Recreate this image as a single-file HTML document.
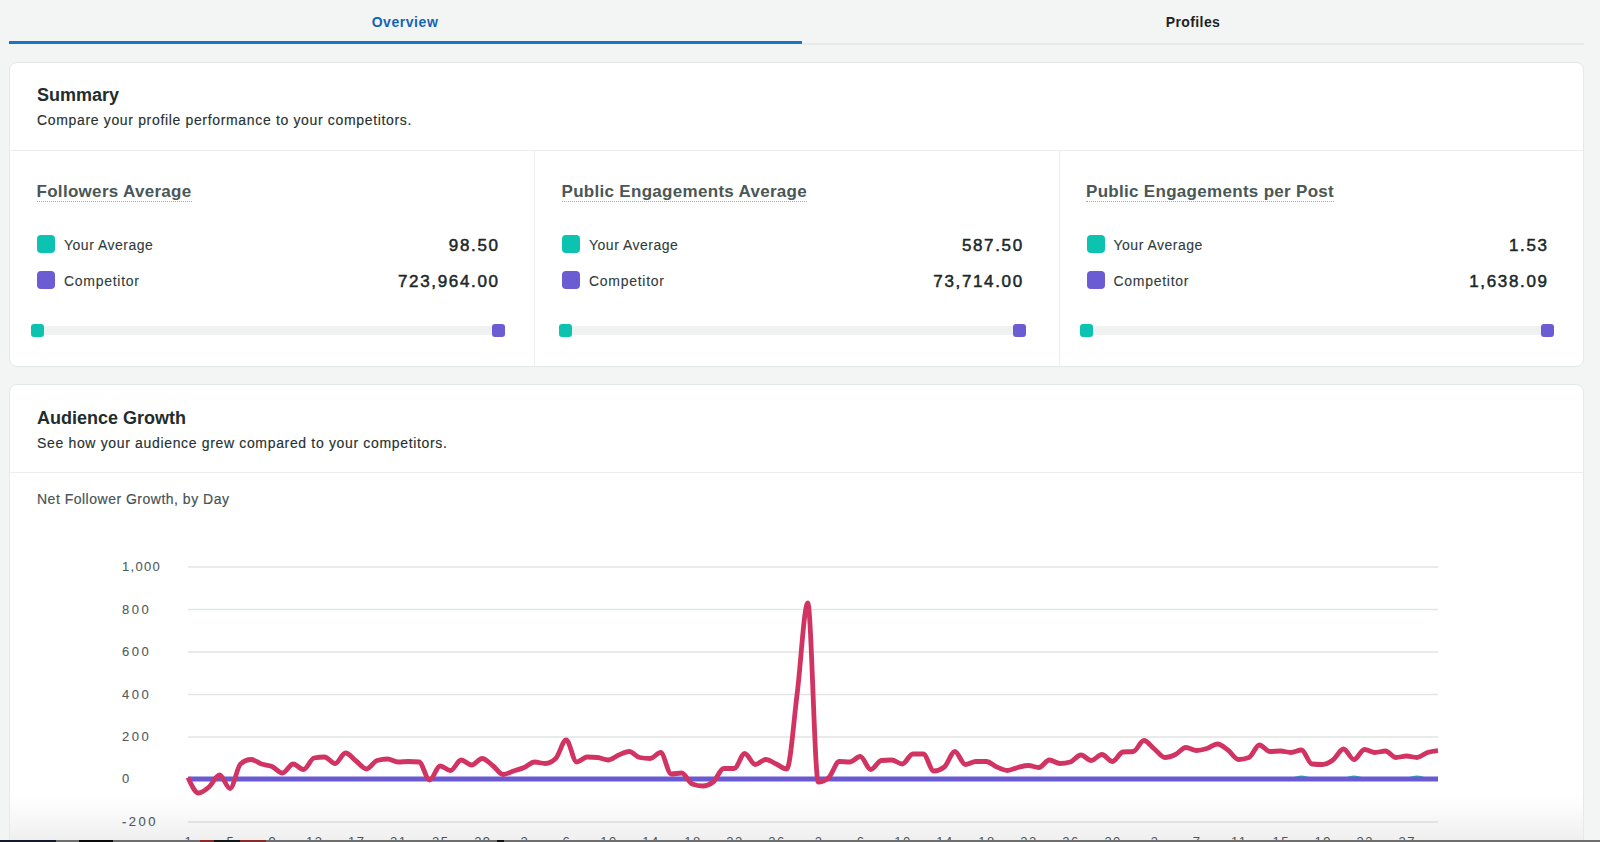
<!DOCTYPE html><html><head><meta charset="utf-8"><title>Competitors Overview</title><style>
*{box-sizing:border-box;margin:0;padding:0}
html,body{width:1600px;height:842px;overflow:hidden;background:#f3f4f4;font-family:"Liberation Sans",sans-serif}
.a{position:absolute;white-space:nowrap;line-height:1}
.card{position:absolute;left:9px;width:1575px;background:#fff;border:1px solid #e6e9e9;border-radius:8px}
.hl{position:absolute;left:0;right:0;height:1px;background:#eceeee}
.vl{position:absolute;width:1px;background:#eceeee}
.h{font-size:18px;font-weight:bold;color:#222d2d}
.sub{font-size:14px;color:#263131;letter-spacing:0.66px;-webkit-text-stroke:0.15px #263131}
.ct{font-size:17px;font-weight:bold;color:#4a5757;letter-spacing:0.3px;border-bottom:1px dotted #a3adad;padding-bottom:1px;line-height:17px}
.sw{position:absolute;width:18px;height:18px;border-radius:4px}
.lab{font-size:14px;color:#2f3b3b;letter-spacing:0.5px;-webkit-text-stroke:0.1px #2f3b3b}
.val{font-size:17px;color:#1c2828;letter-spacing:1.65px;text-align:right;-webkit-text-stroke:0.5px #1c2828}
.track{position:absolute;height:9px;background:#f0f1f1}
.mk{position:absolute;width:13px;height:13px;border-radius:3px}
.teal{background:#0cc3b1}
.purp{background:#6b5cd4}
.yl{font-size:13px;color:#4f5b5b;letter-spacing:2.5px;-webkit-text-stroke:0.1px #4f5b5b}
.xl{font-size:13px;color:#4f5b5b;letter-spacing:1.5px;text-align:center;width:40px}
</style></head><body>
<div class="a" style="left:0;top:14.75px;width:810px;text-align:center;font-size:14px;font-weight:bold;color:#1364b4;letter-spacing:0.55px">Overview</div>
<div class="a" style="left:802px;top:14.75px;width:782px;text-align:center;font-size:14px;font-weight:bold;color:#1b2525;letter-spacing:0.4px">Profiles</div>
<div style="position:absolute;left:9px;top:41px;width:793px;height:3px;background:#1b74c6"></div>
<div style="position:absolute;left:802px;top:43px;width:782px;height:2px;background:#e8eaea"></div>
<div class="card" style="top:62px;height:305px">
<div class="a h" style="left:27.00px;top:22.96px">Summary</div>
<div class="a sub" style="left:27.00px;top:50.15px">Compare your profile performance to your competitors.</div>
<div class="hl" style="top:87px"></div>
<div class="vl" style="left:524px;top:87px;height:216px"></div>
<div class="vl" style="left:1049px;top:87px;height:216px"></div>
<div class="a ct" style="left:26.50px;top:120.11px">Followers Average</div>
<div class="sw teal" style="left:27.00px;top:172.30px"></div>
<div class="sw purp" style="left:27.00px;top:208.30px"></div>
<div class="a lab" style="left:54.00px;top:175.25px">Your Average</div>
<div class="a lab" style="left:54.00px;top:211.15px;letter-spacing:0.72px">Competitor</div>
<div class="a val" style="right:1083.40px;top:174.11px">98.50</div>
<div class="a val" style="right:1083.40px;top:209.51px">723,964.00</div>
<div class="track" style="left:26.50px;top:263.00px;width:462.50px"></div>
<div class="mk teal" style="left:20.50px;top:261.00px"></div>
<div class="mk purp" style="left:482.00px;top:261.00px"></div>
<div class="a ct" style="left:551.50px;top:120.11px">Public Engagements Average</div>
<div class="sw teal" style="left:552.00px;top:172.30px"></div>
<div class="sw purp" style="left:552.00px;top:208.30px"></div>
<div class="a lab" style="left:579.00px;top:175.25px">Your Average</div>
<div class="a lab" style="left:579.00px;top:211.15px;letter-spacing:0.72px">Competitor</div>
<div class="a val" style="right:559.20px;top:174.11px">587.50</div>
<div class="a val" style="right:559.20px;top:209.51px">73,714.00</div>
<div class="track" style="left:554.50px;top:263.00px;width:455.10px"></div>
<div class="mk teal" style="left:548.50px;top:261.00px"></div>
<div class="mk purp" style="left:1002.60px;top:261.00px"></div>
<div class="a ct" style="left:1076.00px;top:120.11px">Public Engagements per Post</div>
<div class="sw teal" style="left:1076.50px;top:172.30px"></div>
<div class="sw purp" style="left:1076.50px;top:208.30px"></div>
<div class="a lab" style="left:1103.50px;top:175.25px">Your Average</div>
<div class="a lab" style="left:1103.50px;top:211.15px;letter-spacing:0.72px">Competitor</div>
<div class="a val" style="right:34.40px;top:174.11px">1.53</div>
<div class="a val" style="right:34.40px;top:209.51px">1,638.09</div>
<div class="track" style="left:1075.50px;top:263.00px;width:462.80px"></div>
<div class="mk teal" style="left:1069.50px;top:261.00px"></div>
<div class="mk purp" style="left:1531.30px;top:261.00px"></div>
</div>
<div class="card" style="top:384px;height:520px">
<div class="a h" style="left:27.00px;top:23.76px">Audience Growth</div>
<div class="a sub" style="left:27.00px;top:50.65px">See how your audience grew compared to your competitors.</div>
<div class="hl" style="top:87px"></div>
<div class="a sub" style="left:27.00px;top:106.55px;color:#4a5757;letter-spacing:0.5px">Net Follower Growth, by Day</div>
</div>
<svg style="position:absolute;left:0;top:0" width="1600" height="842" viewBox="0 0 1600 842"><rect x="188" y="566.25" width="1250" height="1.5" fill="#e2e5e5"/><rect x="188" y="608.75" width="1250" height="1.5" fill="#e2e5e5"/><rect x="188" y="651.25" width="1250" height="1.5" fill="#e2e5e5"/><rect x="188" y="693.75" width="1250" height="1.5" fill="#e2e5e5"/><rect x="188" y="736.25" width="1250" height="1.5" fill="#e2e5e5"/><rect x="188" y="778.25" width="1250" height="1.5" fill="#e2e5e5"/><rect x="188" y="821.25" width="1250" height="1.5" fill="#e2e5e5"/></svg>
<div class="a yl" style="left:122px;top:560.20px;letter-spacing:1.3px;">1,000</div>
<div class="a yl" style="left:122px;top:602.70px;">800</div>
<div class="a yl" style="left:122px;top:645.20px;">600</div>
<div class="a yl" style="left:122px;top:687.70px;">400</div>
<div class="a yl" style="left:122px;top:730.20px;">200</div>
<div class="a yl" style="left:122px;top:772.20px;">0</div>
<div class="a yl" style="left:122px;top:815.20px;">-200</div>
<div class="a xl" style="left:168.75px;top:834.50px">1</div>
<div class="a xl" style="left:210.77px;top:834.50px">5</div>
<div class="a xl" style="left:252.78px;top:834.50px">9</div>
<div class="a xl" style="left:294.80px;top:834.50px">13</div>
<div class="a xl" style="left:336.82px;top:834.50px">17</div>
<div class="a xl" style="left:378.83px;top:834.50px">21</div>
<div class="a xl" style="left:420.85px;top:834.50px">25</div>
<div class="a xl" style="left:462.87px;top:834.50px">29</div>
<div class="a xl" style="left:504.88px;top:834.50px">2</div>
<div class="a xl" style="left:546.90px;top:834.50px">6</div>
<div class="a xl" style="left:588.92px;top:834.50px">10</div>
<div class="a xl" style="left:630.93px;top:834.50px">14</div>
<div class="a xl" style="left:672.95px;top:834.50px">18</div>
<div class="a xl" style="left:714.97px;top:834.50px">22</div>
<div class="a xl" style="left:756.99px;top:834.50px">26</div>
<div class="a xl" style="left:799.00px;top:834.50px">2</div>
<div class="a xl" style="left:841.02px;top:834.50px">6</div>
<div class="a xl" style="left:883.04px;top:834.50px">10</div>
<div class="a xl" style="left:925.05px;top:834.50px">14</div>
<div class="a xl" style="left:967.07px;top:834.50px">18</div>
<div class="a xl" style="left:1009.09px;top:834.50px">22</div>
<div class="a xl" style="left:1051.10px;top:834.50px">26</div>
<div class="a xl" style="left:1093.12px;top:834.50px">30</div>
<div class="a xl" style="left:1135.14px;top:834.50px">3</div>
<div class="a xl" style="left:1177.15px;top:834.50px">7</div>
<div class="a xl" style="left:1219.17px;top:834.50px">11</div>
<div class="a xl" style="left:1261.19px;top:834.50px">15</div>
<div class="a xl" style="left:1303.20px;top:834.50px">19</div>
<div class="a xl" style="left:1345.22px;top:834.50px">23</div>
<div class="a xl" style="left:1387.24px;top:834.50px">27</div>
<svg style="position:absolute;left:0;top:0" width="1600" height="842" viewBox="0 0 1600 842"><path d="M188.00,779.00C191.50,779.00 195.00,779.00 198.50,779.00C202.01,779.00 205.51,779.00 209.01,779.00C212.51,779.00 216.01,779.00 219.51,779.00C223.01,779.00 226.52,779.00 230.02,779.00C233.52,779.00 237.02,779.00 240.52,779.00C244.02,779.00 247.52,779.00 251.03,779.00C254.53,779.00 258.03,779.00 261.53,779.00C265.03,779.00 268.53,779.00 272.03,779.00C275.54,779.00 279.04,779.00 282.54,779.00C286.04,779.00 289.54,779.00 293.04,779.00C296.54,779.00 300.04,779.00 303.55,779.00C307.05,779.00 310.55,779.00 314.05,779.00C317.55,779.00 321.05,779.00 324.55,779.00C328.06,779.00 331.56,779.00 335.06,779.00C338.56,779.00 342.06,779.00 345.56,779.00C349.06,779.00 352.57,779.00 356.07,779.00C359.57,779.00 363.07,779.00 366.57,779.00C370.07,779.00 373.57,779.00 377.08,779.00C380.58,779.00 384.08,779.00 387.58,779.00C391.08,779.00 394.58,779.00 398.08,779.00C401.59,779.00 405.09,779.00 408.59,779.00C412.09,779.00 415.59,779.00 419.09,779.00C422.59,779.00 426.10,779.00 429.60,779.00C433.10,779.00 436.60,779.00 440.10,779.00C443.60,779.00 447.10,779.00 450.61,779.00C454.11,779.00 457.61,779.00 461.11,779.00C464.61,779.00 468.11,779.00 471.61,779.00C475.11,779.00 478.62,779.00 482.12,779.00C485.62,779.00 489.12,779.00 492.62,779.00C496.12,779.00 499.62,779.00 503.13,779.00C506.63,779.00 510.13,779.00 513.63,779.00C517.13,779.00 520.63,779.00 524.13,779.00C527.64,779.00 531.14,779.00 534.64,779.00C538.14,779.00 541.64,779.00 545.14,779.00C548.64,779.00 552.15,779.00 555.65,779.00C559.15,779.00 562.65,779.00 566.15,779.00C569.65,779.00 573.15,779.00 576.66,779.00C580.16,779.00 583.66,779.00 587.16,779.00C590.66,779.00 594.16,779.00 597.66,779.00C601.17,779.00 604.67,779.00 608.17,779.00C611.67,779.00 615.17,779.00 618.67,779.00C622.17,779.00 625.68,779.00 629.18,779.00C632.68,779.00 636.18,779.00 639.68,779.00C643.18,779.00 646.68,779.00 650.18,779.00C653.69,779.00 657.19,779.00 660.69,779.00C664.19,779.00 667.69,779.00 671.19,779.00C674.69,779.00 678.20,779.00 681.70,779.00C685.20,779.00 688.70,779.00 692.20,779.00C695.70,779.00 699.20,779.00 702.71,779.00C706.21,779.00 709.71,779.00 713.21,779.00C716.71,779.00 720.21,779.00 723.71,779.00C727.22,779.00 730.72,779.00 734.22,779.00C737.72,779.00 741.22,779.00 744.72,779.00C748.22,779.00 751.73,779.00 755.23,779.00C758.73,779.00 762.23,779.00 765.73,779.00C769.23,779.00 772.73,779.00 776.24,779.00C779.74,779.00 783.24,779.00 786.74,779.00C790.24,779.00 793.74,779.00 797.24,779.00C800.75,779.00 804.25,779.00 807.75,779.00C811.25,779.00 814.75,779.00 818.25,779.00C821.75,779.00 825.25,779.00 828.76,779.00C832.26,779.00 835.76,779.00 839.26,779.00C842.76,779.00 846.26,779.00 849.76,779.00C853.27,779.00 856.77,779.00 860.27,779.00C863.77,779.00 867.27,779.00 870.77,779.00C874.27,779.00 877.78,779.00 881.28,779.00C884.78,779.00 888.28,779.00 891.78,779.00C895.28,779.00 898.78,779.00 902.29,779.00C905.79,779.00 909.29,779.00 912.79,779.00C916.29,779.00 919.79,779.00 923.29,779.00C926.80,779.00 930.30,779.00 933.80,779.00C937.30,779.00 940.80,779.00 944.30,779.00C947.80,779.00 951.31,779.00 954.81,779.00C958.31,779.00 961.81,779.00 965.31,779.00C968.81,779.00 972.31,779.00 975.82,779.00C979.32,779.00 982.82,779.00 986.32,779.00C989.82,779.00 993.32,779.00 996.82,779.00C1000.32,779.00 1003.83,779.00 1007.33,779.00C1010.83,779.00 1014.33,779.00 1017.83,779.00C1021.33,779.00 1024.83,779.00 1028.34,779.00C1031.84,779.00 1035.34,779.00 1038.84,779.00C1042.34,779.00 1045.84,779.00 1049.34,779.00C1052.85,779.00 1056.35,779.00 1059.85,779.00C1063.35,779.00 1066.85,779.00 1070.35,779.00C1073.85,779.00 1077.36,779.00 1080.86,779.00C1084.36,779.00 1087.86,779.00 1091.36,779.00C1094.86,779.00 1098.36,779.00 1101.87,779.00C1105.37,779.00 1108.87,779.00 1112.37,779.00C1115.87,779.00 1119.37,779.00 1122.87,779.00C1126.38,779.00 1129.88,779.00 1133.38,779.00C1136.88,779.00 1140.38,779.00 1143.88,779.00C1147.38,779.00 1150.89,779.00 1154.39,779.00C1157.89,779.00 1161.39,779.00 1164.89,779.00C1168.39,779.00 1171.89,779.00 1175.39,779.00C1178.90,779.00 1182.40,779.00 1185.90,779.00C1189.40,779.00 1192.90,779.00 1196.40,779.00C1199.90,779.00 1203.41,779.00 1206.91,779.00C1210.41,779.00 1213.91,779.00 1217.41,779.00C1220.91,779.00 1224.41,779.00 1227.92,779.00C1231.42,779.00 1234.92,779.00 1238.42,779.00C1241.92,779.00 1245.42,779.00 1248.92,779.00C1252.43,779.00 1255.93,779.00 1259.43,779.00C1262.93,779.00 1266.43,779.00 1269.93,779.00C1273.43,779.00 1276.94,779.00 1280.44,779.00C1283.94,779.00 1287.44,779.00 1290.94,779.00C1294.44,779.00 1297.94,777.00 1301.45,777.00C1304.95,777.00 1308.45,779.00 1311.95,779.00C1315.45,779.00 1318.95,779.00 1322.45,779.00C1325.96,779.00 1329.46,779.00 1332.96,779.00C1336.46,779.00 1339.96,779.00 1343.46,779.00C1346.96,779.00 1350.46,777.00 1353.97,777.00C1357.47,777.00 1360.97,779.00 1364.47,779.00C1367.97,779.00 1371.47,779.00 1374.97,779.00C1378.48,779.00 1381.98,779.00 1385.48,779.00C1388.98,779.00 1392.48,779.00 1395.98,779.00C1399.48,779.00 1402.99,779.00 1406.49,779.00C1409.99,779.00 1413.49,777.00 1416.99,777.00C1420.49,777.00 1423.99,779.00 1427.50,779.00C1431.00,779.00 1434.50,779.00 1438.00,779.00" fill="none" stroke="#13c2ae" stroke-width="3"/><line x1="188" y1="779" x2="1438" y2="779" stroke="#6a5ad1" stroke-width="5"/><path d="M188.00,777.50C191.50,785.25 195.00,793.00 198.50,793.00C202.01,793.00 205.51,790.00 209.01,787.00C212.51,784.00 216.01,775.00 219.51,775.00C223.01,775.00 226.52,788.50 230.02,788.50C233.52,788.50 237.02,767.00 240.52,764.00C244.02,761.00 247.52,759.50 251.03,759.50C254.53,759.50 258.03,762.83 261.53,764.00C265.03,765.17 268.53,765.00 272.03,766.50C275.54,768.00 279.04,773.00 282.54,773.00C286.04,773.00 289.54,764.00 293.04,764.00C296.54,764.00 300.04,769.50 303.55,769.50C307.05,769.50 310.55,758.67 314.05,758.00C317.55,757.33 321.05,757.00 324.55,757.00C328.06,757.00 331.56,763.50 335.06,763.50C338.56,763.50 342.06,753.00 345.56,753.00C349.06,753.00 352.57,758.33 356.07,761.00C359.57,763.67 363.07,769.00 366.57,769.00C370.07,769.00 373.57,761.50 377.08,760.50C380.58,759.50 384.08,759.00 387.58,759.00C391.08,759.00 394.58,762.00 398.08,762.00C401.59,762.00 405.09,761.50 408.59,761.50C412.09,761.50 415.59,761.67 419.09,762.00C422.59,762.33 426.10,780.00 429.60,780.00C433.10,780.00 436.60,766.00 440.10,766.00C443.60,766.00 447.10,770.50 450.61,770.50C454.11,770.50 457.61,760.00 461.11,760.00C464.61,760.00 468.11,765.00 471.61,765.00C475.11,765.00 478.62,758.50 482.12,758.50C485.62,758.50 489.12,762.83 492.62,765.50C496.12,768.17 499.62,774.50 503.13,774.50C506.63,774.50 510.13,772.17 513.63,771.00C517.13,769.83 520.63,769.00 524.13,767.50C527.64,766.00 531.14,762.00 534.64,762.00C538.14,762.00 541.64,763.50 545.14,763.50C548.64,763.50 552.15,761.83 555.65,758.50C559.15,755.17 562.65,740.00 566.15,740.00C569.65,740.00 573.15,762.00 576.66,762.00C580.16,762.00 583.66,757.00 587.16,757.00C590.66,757.00 594.16,757.17 597.66,757.50C601.17,757.83 604.67,760.00 608.17,760.00C611.67,760.00 615.17,756.42 618.67,755.00C622.17,753.58 625.68,751.50 629.18,751.50C632.68,751.50 636.18,756.83 639.68,757.50C643.18,758.17 646.68,758.50 650.18,758.50C653.69,758.50 657.19,752.50 660.69,752.50C664.19,752.50 667.69,774.00 671.19,774.00C674.69,774.00 678.20,773.00 681.70,773.00C685.20,773.00 688.70,782.67 692.20,784.00C695.70,785.33 699.20,786.00 702.71,786.00C706.21,786.00 709.71,784.67 713.21,782.00C716.71,779.33 720.21,768.50 723.71,768.50C727.22,768.50 730.72,768.50 734.22,768.50C737.72,768.50 741.22,753.50 744.72,753.50C748.22,753.50 751.73,764.50 755.23,764.50C758.73,764.50 762.23,759.50 765.73,759.50C769.23,759.50 772.73,762.42 776.24,764.00C779.74,765.58 783.24,769.00 786.74,769.00C790.24,769.00 793.74,720.67 797.24,693.00C800.75,665.33 804.25,603.00 807.75,603.00C811.25,603.00 814.75,782.00 818.25,782.00C821.75,782.00 825.25,780.53 828.76,777.60C832.26,774.67 835.76,761.50 839.26,761.50C842.76,761.50 846.26,762.00 849.76,762.00C853.27,762.00 856.77,756.50 860.27,756.50C863.77,756.50 867.27,769.50 870.77,769.50C874.27,769.50 877.78,760.83 881.28,760.50C884.78,760.17 888.28,760.00 891.78,760.00C895.28,760.00 898.78,764.00 902.29,764.00C905.79,764.00 909.29,754.00 912.79,754.00C916.29,754.00 919.79,754.00 923.29,754.00C926.80,754.00 930.30,771.00 933.80,771.00C937.30,771.00 940.80,769.67 944.30,767.00C947.80,764.33 951.31,751.50 954.81,751.50C958.31,751.50 961.81,764.50 965.31,764.50C968.81,764.50 972.31,761.50 975.82,761.50C979.32,761.50 982.82,761.50 986.32,761.50C989.82,761.50 993.32,765.50 996.82,767.00C1000.32,768.50 1003.83,770.50 1007.33,770.50C1010.83,770.50 1014.33,768.33 1017.83,767.50C1021.33,766.67 1024.83,765.50 1028.34,765.50C1031.84,765.50 1035.34,767.50 1038.84,767.50C1042.34,767.50 1045.84,760.00 1049.34,760.00C1052.85,760.00 1056.35,763.50 1059.85,763.50C1063.35,763.50 1066.85,763.00 1070.35,762.00C1073.85,761.00 1077.36,755.00 1080.86,755.00C1084.36,755.00 1087.86,760.50 1091.36,760.50C1094.86,760.50 1098.36,754.50 1101.87,754.50C1105.37,754.50 1108.87,761.50 1112.37,761.50C1115.87,761.50 1119.37,752.33 1122.87,752.00C1126.38,751.67 1129.88,751.83 1133.38,751.50C1136.88,751.17 1140.38,740.50 1143.88,740.50C1147.38,740.50 1150.89,746.17 1154.39,749.00C1157.89,751.83 1161.39,757.50 1164.89,757.50C1168.39,757.50 1171.89,756.17 1175.39,754.50C1178.90,752.83 1182.40,747.50 1185.90,747.50C1189.40,747.50 1192.90,750.50 1196.40,750.50C1199.90,750.50 1203.41,749.58 1206.91,748.50C1210.41,747.42 1213.91,744.00 1217.41,744.00C1220.91,744.00 1224.41,747.42 1227.92,750.00C1231.42,752.58 1234.92,759.50 1238.42,759.50C1241.92,759.50 1245.42,758.83 1248.92,757.50C1252.43,756.17 1255.93,745.00 1259.43,745.00C1262.93,745.00 1266.43,751.50 1269.93,751.50C1273.43,751.50 1276.94,751.00 1280.44,751.00C1283.94,751.00 1287.44,752.50 1290.94,752.50C1294.44,752.50 1297.94,750.00 1301.45,750.00C1304.95,750.00 1308.45,763.67 1311.95,764.00C1315.45,764.33 1318.95,764.50 1322.45,764.50C1325.96,764.50 1329.46,762.58 1332.96,760.00C1336.46,757.42 1339.96,749.00 1343.46,749.00C1346.96,749.00 1350.46,759.50 1353.97,759.50C1357.47,759.50 1360.97,749.50 1364.47,749.50C1367.97,749.50 1371.47,752.50 1374.97,752.50C1378.48,752.50 1381.98,751.00 1385.48,751.00C1388.98,751.00 1392.48,757.50 1395.98,757.50C1399.48,757.50 1402.99,756.00 1406.49,756.00C1409.99,756.00 1413.49,757.50 1416.99,757.50C1420.49,757.50 1423.99,753.67 1427.50,752.50C1431.00,751.33 1434.50,750.92 1438.00,750.50" fill="none" stroke="#d13462" stroke-width="4.8" stroke-linejoin="round" stroke-linecap="butt"/></svg>
<div style="position:absolute;left:10px;top:792px;width:1573px;height:48px;background:linear-gradient(rgba(0,0,0,0) 0%,rgba(0,0,0,0.015) 35%,rgba(0,0,0,0.062) 100%)"></div>
<div style="position:absolute;left:0;top:840px;width:1600px;height:2px;background:#6e6e6e"></div>
<div style="position:absolute;left:0px;top:840px;width:56px;height:2px;background:#141a2a"></div>
<div style="position:absolute;left:79px;top:840px;width:34px;height:2px;background:#0a0a0a"></div>
<div style="position:absolute;left:200px;top:840px;width:14px;height:2px;background:#8a2a2a"></div>
<div style="position:absolute;left:214px;top:840px;width:26px;height:2px;background:#151515"></div>
<div style="position:absolute;left:240px;top:840px;width:26px;height:2px;background:#8a2a2a"></div>
<div style="position:absolute;left:497px;top:840px;width:7px;height:2px;background:#111"></div>
</body></html>
